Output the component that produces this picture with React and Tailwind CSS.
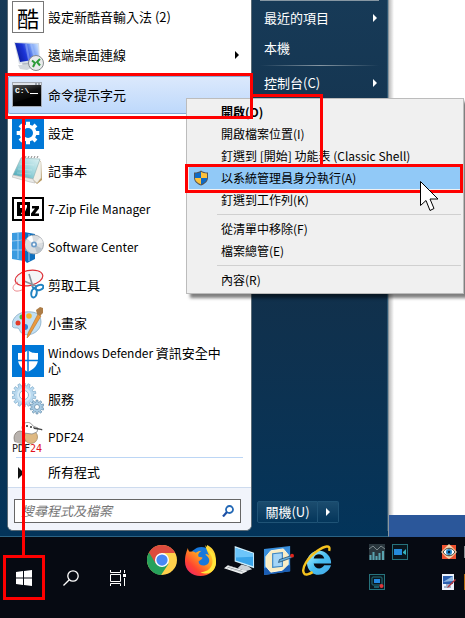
const gearPoints = (cx, cy, outer, inner, teeth) => {
    const points = [];
    for (let i = 0; i < teeth; i++) {
        const base = (i / teeth) * Math.PI * 2;
        const step = (Math.PI * 2) / teeth;
        [[-0.3, inner], [-0.22, outer], [0.22, outer], [0.3, inner]].forEach(([offset, radius]) => {
            const angle = base + offset * step;
            points.push(`${(cx + Math.sin(angle) * radius).toFixed(1)},${(cy - Math.cos(angle) * radius).toFixed(1)}`);
        });
    }
    return points.join(' ');
};

const Icon = ({ children, className = 'size-8' }) => (
    <svg viewBox="0 0 32 32" className={`${className} shrink-0`} aria-hidden="true">{children}</svg>
);

const ChewingIcon = () => (
    <span className="flex size-8 shrink-0 items-center justify-center border border-[#777] bg-white text-[22px] leading-none" aria-hidden="true">酷</span>
);

const RemoteIcon = () => (
    <Icon>
        <defs>
            <linearGradient id="remoteScreen" x1="0" y1="0.6" x2="1" y2="0.3">
                <stop offset="0" stopColor="#0a1a9a" />
                <stop offset="0.4" stopColor="#1c35d8" />
                <stop offset="0.7" stopColor="#6f97f2" />
                <stop offset="1" stopColor="#c3dcff" />
            </linearGradient>
        </defs>
        <path d="M10 24l8-1 1 4-8 1z" fill="#b4bbc4" />
        <path d="M6 26l13-1 3 3-7 3-7-1z" fill="#d3d7dc" />
        <path d="M2 3l25 1 1 17-21 4z" fill="#d5dce6" />
        <path d="M3 4l23 1 1 15-19 3z" fill="url(#remoteScreen)" />
        <path d="M14 5l3 16M19 5l4 15" stroke="#b9d0ff" strokeOpacity="0.4" strokeWidth="2" />
        <circle cx="24" cy="24" r="7.500" fill="#e9ebec" stroke="#858a8e" />
        <path d="M20 21.500l3 2.500-2 4M28 20l-3 3 3 3.500" stroke="#2c9c38" strokeWidth="2" fill="none" />
    </Icon>
);

const CommandIcon = () => (
    <Icon>
        <defs>
            <linearGradient id="cmdGlass" x1="0" y1="0" x2="0.4" y2="1">
                <stop offset="0" stopColor="#555" />
                <stop offset="0.5" stopColor="#111" />
                <stop offset="1" stopColor="#000" />
            </linearGradient>
        </defs>
        <rect x="0.500" y="3.500" width="29" height="24" fill="#000" stroke="#a3a9b3" />
        <rect x="1" y="4" width="28" height="2" fill="#dfe3ea" />
        <path d="M23 5h2m1 0h2" stroke="#5b6470" />
        <path d="M1 6h28v9L1 24z" fill="url(#cmdGlass)" />
        <text x="3" y="14" fontFamily="Liberation Mono, monospace" fontSize="8" fontWeight="700" fill="#fff">C:\</text>
        <path d="M18 14.500h8" stroke="#fff" />
    </Icon>
);

const SettingsIcon = () => (
    <Icon>
        <rect width="32" height="32" fill="#0078d7" />
        <polygon points={gearPoints(16, 16, 11.5, 8.5, 8)} fill="#fff" />
        <circle cx="16" cy="16" r="5" fill="#0078d7" />
    </Icon>
);

const NotepadIcon = () => (
    <Icon>
        <defs>
            <linearGradient id="notepadCover" x1="0" y1="1" x2="1" y2="0">
                <stop offset="0" stopColor="#3b9fb0" />
                <stop offset="0.5" stopColor="#9dd5dc" />
                <stop offset="1" stopColor="#dff2f3" />
            </linearGradient>
        </defs>
        <path d="M27 4l2 3 1 18-5 4-5-5z" fill="#b99a62" />
        <path d="M27 5l2 2v16l-4 5-5-4z" fill="#f2efe6" stroke="#c6c1b2" strokeWidth="0.5" />
        <path d="M9 3l19 1-7 20-20-4z" fill="url(#notepadCover)" stroke="#8bb1b5" strokeWidth="0.6" />
        <path d="M1 20l20 4 2 4-5-1L0 22z" fill="#e9e9e6" stroke="#aaa" strokeWidth="0.5" />
        <path d="M10 3l1-2M13 3l1-2M16 3l1-2M19 3l1-2M22 3l1-2M25 3l1-2" stroke="#888" />
        <path d="M8 9l14 1M6 14l14 1M5 18l14 1" stroke="#fff" strokeOpacity="0.25" />
    </Icon>
);

const SevenZipIcon = () => (
    <Icon>
        <rect x="1" y="5" width="30" height="22" fill="#fff" stroke="#000" strokeWidth="2" />
        <rect x="5" y="9" width="13" height="14" fill="#000" />
        <path d="M8 12h7v2l-3 7h-3l3-6H8z" fill="#fff" />
        <path d="M20 13h7v2.500l-4 5h4V23h-8v-2.500l4-5h-3z" fill="#000" />
    </Icon>
);

const SoftwareCenterIcon = () => (
    <Icon>
        <path d="M0 2l12-1v29L0 28z" fill="#3b9be0" />
        <path d="M12 1l11 2v25l-8 4-3-3z" fill="#0f6fbe" />
        <path d="M0 10l12-1 11 1M0 19h23M6 2v26M17 3v27" stroke="#9fd0f5" />
        <circle cx="22" cy="13.500" r="9.500" fill="#d9dcdf" stroke="#969da5" strokeWidth="0.8" />
        <path d="M22 13.500l-7-6a9 9 0 0 1 5-3z" fill="#fff" />
        <path d="M22 13.500l8 4a9 9 0 0 1-5 5z" fill="#b9c3cc" />
        <path d="M22 13.500l9-2a9 9 0 0 0-3-5z" fill="#eee" />
        <circle cx="22" cy="13.500" r="3" fill="#6d9dca" />
        <circle cx="22" cy="13.500" r="1.200" fill="#fff" />
    </Icon>
);

const SnippingIcon = () => (
    <Icon>
        <ellipse cx="17" cy="9" rx="14" ry="7.500" transform="rotate(-12 17 9)" fill="#f4f5f6" stroke="#dd2e36" strokeWidth="1.200" />
        <path d="M6 13c-5 3-6 6-4 8 2 2 6 1 10-1" stroke="#ec8a8e" fill="none" />
        <path d="M17 5l4 13M12 12l12 5" stroke="#87919a" strokeWidth="1.600" />
        <ellipse cx="27.500" cy="18.500" rx="4" ry="2.500" transform="rotate(-20 27.500 18.500)" fill="none" stroke="#2083c2" strokeWidth="2" />
        <ellipse cx="22" cy="24" rx="2.700" ry="4.500" transform="rotate(10 22 24)" fill="none" stroke="#2083c2" strokeWidth="2" />
        <path d="M19 17l6 2-4 1z" fill="#2083c2" />
    </Icon>
);

const PaintIcon = () => (
    <Icon>
        <path d="M13 5C4 6 0 13 0 18c0 3 3 3 5 3 3 0 2 4 6 6 8 3 18-3 18-12S22 4 13 5z" fill="#c1dff3" stroke="#7ba3bf" strokeWidth="0.700" />
        <circle cx="10" cy="10" r="2.500" fill="#52b74b" />
        <circle cx="17" cy="9" r="2.800" fill="#f4b62d" />
        <circle cx="6" cy="16" r="2.500" fill="#e23c29" />
        <circle cx="13" cy="20" r="3" fill="#387fd1" />
        <path d="M26 7l3 2-12 20-2 2 1-5z" fill="#ea9a3e" stroke="#ad6720" strokeWidth="0.500" />
        <path d="M24 3l4-3 3 1v5l-3 3-3-2z" fill="#ad7d47" />
    </Icon>
);

const DefenderIcon = () => (
    <Icon>
        <rect width="32" height="32" fill="#0078d7" />
        <path d="M16 5c3 3 6 3 10 3v6c0 6-4 10-10 13C10 24 6 20 6 14V8c4 0 7 0 10-3z" fill="#fff" />
        <path d="M16 4v24M5 15.500h22" stroke="#0078d7" strokeWidth="1.500" />
    </Icon>
);

const ServicesIcon = () => (
    <Icon>
        <polygon points={gearPoints(12, 12, 12, 9.5, 14)} fill="#b9d9ef" stroke="#7caaca" strokeWidth="0.700" />
        <circle cx="12" cy="12" r="7" fill="#d8ebf7" />
        <circle cx="12" cy="12" r="4.500" fill="#fff" stroke="#8fb8d4" />
        <polygon points={gearPoints(25, 24, 7, 5, 10)} fill="#a9cce5" stroke="#678fac" strokeWidth="0.700" />
        <circle cx="25" cy="24" r="2.500" fill="#fff" stroke="#7b9eb7" />
    </Icon>
);

const Pdf24Icon = () => (
    <Icon>
        <ellipse cx="8" cy="17" rx="6" ry="7" fill="#b9b3ae" stroke="#777069" strokeWidth="0.700" />
        <ellipse cx="19" cy="16" rx="6.500" ry="6.500" fill="#dfb982" stroke="#9d8158" strokeWidth="0.700" />
        <path d="M10 7c0-6 8-8 11-2l5 2-1 4-5 2-8-1z" fill="#fff" stroke="#888" strokeWidth="0.800" />
        <path d="M21 6l9 2c1 1 0 2-1 1l-7-1z" fill="#444" />
        <circle cx="15" cy="5" r="1" fill="#333" />
        <circle cx="19" cy="6" r="1" fill="#333" />
        <path d="M3 21c6 3 18 3 25 0v3H3z" fill="#fff" />
        <text x="0" y="31" fontFamily="DejaVu Sans Mono, monospace" fontSize="10" fill="#222">PDF<tspan fill="#e1131d">24</tspan></text>
    </Icon>
);

const programs = [
    { label: '設定', icon: SettingsIcon },
    { label: '記事本', icon: NotepadIcon },
    { latin: '7-Zip File Manager', icon: SevenZipIcon },
    { latin: 'Software Center', icon: SoftwareCenterIcon },
    { label: '剪取工具', icon: SnippingIcon },
    { label: '小畫家', icon: PaintIcon },
    { latin: 'Windows Defender ', label: '資訊安全中心', icon: DefenderIcon },
    { label: '服務', icon: ServicesIcon },
    { latin: 'PDF24', icon: Pdf24Icon },
];

const Arrow = ({ className = '' }) => (
    <svg viewBox="0 0 4 8" className={`h-2 w-1 shrink-0 ${className}`} aria-hidden="true"><path d="M0 0l4 4-4 4z" fill="currentColor" /></svg>
);

const ProgramRow = ({ latin, label, icon: ProgramIcon, submenu }) => (
    <button type="button" className="flex h-[38px] w-full shrink-0 items-center gap-1 pr-3 pl-1 text-left text-[13px] leading-[15px]">
        <ProgramIcon />
        <span className="max-w-[176px] flex-1 pb-[2px]">
            {latin && <span className="text-xs leading-[15px]">{latin}</span>}
            {label}
        </span>
        {submenu && <Arrow className="ml-auto" />}
    </button>
);

const PlaceRow = ({ label, submenu }) => (
    <button type="button" className="flex h-[30px] w-full items-center justify-between pr-[10px] pl-3 text-left text-[13px] leading-4">
        <span>{label}</span>
        {submenu && <Arrow />}
    </button>
);

const PlaceDivider = () => (
    <div className="mx-2 my-[2px] h-px bg-gradient-to-r from-transparent via-[#8797a3] to-transparent"></div>
);

const Shield = () => (
    <svg viewBox="0 0 16 16" className="size-4" aria-hidden="true">
        <path d="M8 0.500c2 1.500 4 2 7 2v5c0 4-3 6.500-7 8-4-1.500-7-4-7-8v-5c3 0 5-0.500 7-2z" fill="#555" />
        <path d="M8 1.800V8H2V3.500c2.500 0 4.500-0.500 6-1.700z" fill="#0f6ac4" />
        <path d="M8 1.800c1.500 1.200 3.500 1.700 6 1.700V8H8z" fill="#fdc13a" />
        <path d="M2 8h6v6.400C4.500 13 2 11 2 8z" fill="#fdc13a" />
        <path d="M8 8h6c0 3-2.500 5-6 6.400z" fill="#0f6ac4" />
    </svg>
);

const MenuItem = ({ label, bold, active }) => (
    <button
        type="button"
        role="menuitem"
        className={`flex h-[22px] w-full items-center text-left text-[12px] leading-4 ${bold ? 'font-bold' : ''} ${active ? 'bg-[#91c9f7]' : ''}`}
    >
        <span className="flex w-8 shrink-0 pl-1">{active && <Shield />}</span>
        {label}
    </button>
);

const MenuDivider = () => <div className="my-[3px] ml-7 h-px bg-[#d0d0d0]"></div>;

const ContextMenu = () => (
    <div role="menu" className="absolute top-[98px] left-[186px] w-[278px] border border-[#bcbcbc] bg-[#f0f0f0] p-[2px] shadow-[4px_4px_3px_rgba(0,0,0,0.5)]">
        <MenuItem label="開啟(O)" bold />
        <MenuItem label="開啟檔案位置(I)" />
        <MenuItem label="釘選到 [開始] 功能表 (Classic Shell)" />
        <MenuItem label="以系統管理員身分執行(A)" active />
        <MenuItem label="釘選到工作列(K)" />
        <MenuDivider />
        <MenuItem label="從清單中移除(F)" />
        <MenuItem label="檔案總管(E)" />
        <MenuDivider />
        <MenuItem label="內容(R)" />
    </div>
);

const StartMenu = () => (
    <section className="flex w-[389px] shrink-0 border-r border-r-[#8b969e] border-b border-b-[#2b6384] bg-gradient-to-b from-[#173a57] via-[#12304a] to-[#03345a] pb-[5px] pl-[7px]">
        <div className="flex w-[245px] shrink-0 flex-col overflow-hidden rounded-b-md border-x border-b border-[#5b6b76] bg-white">
            <div className="-mt-[2px]">
                <ProgramRow label="設定新酷音輸入法 (2)" icon={ChewingIcon} />
                <ProgramRow label="遠端桌面連線" icon={RemoteIcon} submenu />
            </div>
            <div className="mt-[2px] rounded-xs bg-gradient-to-b from-[#dce9fc] to-[#bdd8fb] shadow-[inset_0_0_0_1px_#84a9d6]">
                <ProgramRow label="命令提示字元" icon={CommandIcon} />
            </div>
            {programs.map((program) => <ProgramRow key={program.label ?? program.latin} {...program} />)}
            <div className="mx-2 mt-px h-px bg-[#bcd6f5]"></div>
            <button type="button" className="flex h-[29px] items-center pl-[10px] text-left text-[13px] leading-4">
                <svg viewBox="0 0 6 12" className="h-3 w-[6px]" aria-hidden="true"><path d="M0 0l6 6-6 6z" fill="#111" /></svg>
                <span className="ml-6 pb-[2px]">所有程式</span>
            </button>
            <form className="flex-1 border-t border-t-[#cddbee] bg-[#f1f4fb] px-[6px] pt-[11px] pb-[7px]">
                <label className="mr-1 flex h-6 items-center border border-[#666] bg-white px-[6px]">
                    <input type="search" aria-label="搜尋程式及檔案" placeholder="搜尋程式及檔案" className="min-w-0 flex-1 text-[13px] leading-4 italic outline-none placeholder:text-[#777]" />
                    <svg viewBox="0 0 12 12" className="size-3" aria-hidden="true">
                        <circle cx="7.500" cy="4.500" r="3.500" fill="none" stroke="#2368b5" strokeWidth="1.800" />
                        <path d="M5 7l-4 4.500" stroke="#1d4fa5" strokeWidth="2.200" />
                    </svg>
                </label>
            </form>
        </div>
        <div className="flex flex-1 flex-col justify-between border-r border-r-[#2f5874] text-white">
            <div>
                <div className="mx-2 h-px bg-[#8797a3]"></div>
                <div className="mt-[2px]">
                    <PlaceRow label="最近的項目" submenu />
                    <PlaceRow label="本機" />
                </div>
                <PlaceDivider />
                <PlaceRow label="控制台(C)" submenu />
            </div>
            <div className="mb-2 ml-[5px] flex h-[22px] text-[13px] leading-4">
                <button type="button" className="w-[61px] rounded-l-xs border border-[#1f5376] bg-gradient-to-b from-[#1b4c6e] to-[#04365b]">關機(U)</button>
                <button type="button" aria-label="關機選項" className="flex w-[21px] items-center justify-center rounded-r-xs border border-l-0 border-[#1f5376] bg-gradient-to-b from-[#1b4c6e] to-[#04365b]"><Arrow /></button>
            </div>
        </div>
    </section>
);

const ChromeIcon = () => (
    <Icon className="size-[30px]">
        <circle cx="16" cy="16" r="16" fill="#ffd04b" />
        <path d="M16 16L2.100 8A16 16 0 0 0 15 32l8-12z" fill="#26a15b" />
        <path d="M16 8.500h14A16 16 0 0 0 2.100 8l7.400 12z" fill="#dc4b3e" />
        <circle cx="16" cy="16" r="7.500" fill="#fff" />
        <circle cx="16" cy="16" r="6" fill="#4788f4" />
    </Icon>
);

const FirefoxIcon = () => (
    <Icon className="size-[31px]">
        <defs>
            <linearGradient id="foxFire" x1="1" y1="0" x2="0.100" y2="1">
                <stop offset="0" stopColor="#fff044" />
                <stop offset="0.450" stopColor="#ffa020" />
                <stop offset="0.750" stopColor="#ff4530" />
                <stop offset="1" stopColor="#ed1f70" />
            </linearGradient>
        </defs>
        <circle cx="17" cy="14" r="12" fill="#1678dc" />
        <path d="M3 3c0 2 1 3 2 4 3-1 5 0 6 1 2-1 4-2 6-2-3 2-4 4-3 6l4 1c0 2-3 3-4 4 0 4 6 6 10 2 3-4-1-8-3-9 1-1 3 0 4 1-2-5-4-7-2-11 7 4 9 9 9 17 0 9-7 15-16 15S0 26 0 17C0 11 1 8 3 3z" fill="url(#foxFire)" />
        <path d="M21 0c0 5 6 8 7 14 2 8-4 14-12 14 12 6 20-7 14-18-2-4-6-5-9-10z" fill="#ffe63a" />
    </Icon>
);

const ComputerIcon = () => (
    <Icon className="size-[31px]">
        <path d="M11 1l20 7v16l-20-7z" fill="#cdeefd" />
        <path d="M12 3l18 6v13l-18-6z" fill="#39a4e9" />
        <path d="M12 3l18 6v3L12 13z" fill="#6cc5fa" />
        <path d="M18 20l7 2 4 3-7 2-8-3z" fill="#ccd2d7" />
        <path d="M4 21l20 6-6 3L0 24z" fill="#eef0f1" />
        <path d="M4 23l16 5M7 22l-4 2m8-1l-4 2m8-1l-4 2m8-1l-4 2" stroke="#929ba2" strokeWidth="0.700" />
    </Icon>
);

const EditorIcon = () => (
    <Icon className="size-[31px]">
        <path d="M1 4l27-3v26L1 31z" fill="#388edc" />
        <path d="M1 24l27-3v6L1 31z" fill="#1b5eb5" />
        <path d="M8 6l13-2 5 6v10l-6 6-12 2-5-6V12z" fill="#f9edc5" stroke="#fff8dd" />
        <path d="M10 9l10-1v14l-10 1z" fill="#a4d5f7" stroke="#3c86c4" strokeWidth="1.200" />
        <path d="M17 15l12-4 1 2-11 4-3 1z" fill="#63b0df" stroke="#183a57" strokeWidth="0.700" />
        <circle cx="30" cy="11" r="2" fill="#e2251b" />
    </Icon>
);

const ExplorerIcon = () => (
    <Icon className="size-[31px]">
        <defs>
            <linearGradient id="ieBlue" x1="0" y1="0" x2="1" y2="1">
                <stop offset="0" stopColor="#b0f2ff" />
                <stop offset="0.500" stopColor="#48bef0" />
                <stop offset="1" stopColor="#45a9e9" />
            </linearGradient>
        </defs>
        <path d="M5 18a12 12 0 1 1 25 1H12c1 6 8 7 11 2h7c-5 14-24 13-25-3zM12 14h11c-1-6-10-6-11 0z" fill="url(#ieBlue)" />
        <path d="M28 6c2-7-5-5-12 0C6 13-1 24 2 29c1 3 6 1 9-1" fill="none" stroke="#f5c21e" strokeWidth="2.500" />
    </Icon>
);

const TrayButton = ({ label, children }) => (
    <button type="button" aria-label={label} className="flex h-[30px] w-[23px] items-center justify-center">
        <svg viewBox="0 0 16 16" className="size-4" aria-hidden="true">{children}</svg>
    </button>
);

const apps = [
    { label: 'Chrome', icon: ChromeIcon },
    { label: 'Firefox', icon: FirefoxIcon },
    { label: '本機', icon: ComputerIcon },
    { label: '編輯器', icon: EditorIcon },
    { label: 'Internet Explorer', icon: ExplorerIcon },
];

const Taskbar = () => (
    <footer className="flex h-[81px] shrink-0 items-center overflow-hidden bg-[#060a12] text-white">
        <div className="flex shrink-0 items-center">
            <button type="button" aria-label="開始" className="flex h-12 w-[47px] items-center justify-center">
                <svg viewBox="0 0 16 16" className="size-4" fill="#fff" aria-hidden="true">
                    <path d="M0 2l7-1v6.500H0zM8 0.900L16 0v7.500H8zM0 8.500h7V15l-7-1zM8 8.500h8V16l-8-1z" />
                </svg>
            </button>
            <button type="button" aria-label="搜尋" className="flex h-12 w-[47px] items-center justify-center">
                <svg viewBox="0 0 16 16" className="size-4" fill="none" stroke="#fff" strokeWidth="1.300" aria-hidden="true">
                    <circle cx="10" cy="6" r="5.200" />
                    <path d="M6.300 9.700L0.500 15.500" />
                </svg>
            </button>
            <button type="button" aria-label="工作檢視" className="flex h-12 w-12 items-center justify-center">
                <svg viewBox="0 0 16 16" className="size-4" fill="none" stroke="#fff" aria-hidden="true">
                    <path d="M0.500 0v2.500h10V0M0.500 16v-2.500h10V16M0.500 4.500h10v7h-10zM14.500 0v3M14.500 8v8" />
                    <path d="M13 4h3v3h-3z" fill="#fff" stroke="none" />
                </svg>
            </button>
        </div>
        <nav className="flex shrink-0 self-start pt-[7px]">
            {apps.map(({ label, icon: AppIcon }) => (
                <button key={label} type="button" aria-label={label} className="flex h-8 w-[39px] items-center justify-center"><AppIcon /></button>
            ))}
        </nav>
        <div className="ml-7 flex shrink-0 gap-[26px] self-start">
            <div className="grid grid-cols-2">
                <TrayButton label="網路流量">
                    <rect width="16" height="16" fill="#29363d" />
                    <path d="M0 5l4-3 4 4 4-4 4 3" stroke="#7b878b" fill="none" />
                    <path d="M1.500 16v-5M4.500 16V8M7.500 16v-4M10.500 16V9M14 16V7" stroke="#59a3b0" strokeWidth="2" />
                </TrayButton>
                <TrayButton label="攝影機">
                    <rect x="0.500" y="0.500" width="15" height="15" fill="#09171e" stroke="#26727c" />
                    <rect x="2" y="5" width="8" height="6" fill="#258bdc" />
                    <path d="M11 8l3-3v6l-3-2z" fill="#37b5bd" />
                </TrayButton>
                <TrayButton label="螢幕錄影">
                    <rect x="0.500" y="0.500" width="15" height="15" fill="#09171e" stroke="#26727c" />
                    <rect x="3" y="3" width="10" height="8" rx="1" fill="#09171e" stroke="#26727c" />
                    <rect x="5" y="5" width="6" height="4" fill="#2489e1" />
                    <path d="M5 13h5" stroke="#31a1b3" />
                    <circle cx="12.500" cy="12" r="2" fill="#e0373b" />
                </TrayButton>
            </div>
            <div className="grid grid-cols-[23px_23px]">
                <TrayButton label="護眼">
                    <rect x="1" y="1" width="14" height="14" fill="#ef5330" />
                    <path d="M0 8l5-5 3-3 3 3 5 5-5 5-3 2-3-2z" fill="#f8d5ac" />
                    <path d="M2 8c3-5 9-5 12 0-3 5-9 5-12 0z" fill="#fff" stroke="#453828" />
                    <circle cx="8" cy="8" r="3" fill="#2186c8" />
                    <circle cx="8" cy="8" r="1.200" fill="#06182c" />
                </TrayButton>
                <TrayButton label="音量"><rect width="16" height="12" y="2" fill="#8a8d91" /></TrayButton>
                <TrayButton label="畫面擷取">
                    <rect x="1" y="0" width="12" height="16" fill="#edf3fb" />
                    <rect x="2" y="2" width="10" height="8" fill="#2b5faf" />
                    <path d="M2 8l10-6v5z" fill="#90b9e1" />
                    <path d="M3 13h7M5 11h4" stroke="#536f94" />
                    <path d="M15 6l-7 7-2 1 1-2 7-7z" fill="#b2353a" />
                </TrayButton>
                <TrayButton label="更新"><rect width="16" height="16" fill="#b36b0d" /></TrayButton>
            </div>
        </div>
    </footer>
);

const Callouts = () => (
    <svg className="pointer-events-none absolute top-0 left-0 h-[618px] w-[465px]" viewBox="0 0 465 618" fill="none" stroke="#fe0000" strokeWidth="3" aria-hidden="true">
        <path d="M6.500 74.500h245v43h-245zM251 95.500h70.500V166M186.500 165.500h275v26h-275zM23.500 117v440M4.500 556.500h39v42h-39z" />
        <path d="M420.500 181.500v24l5.500-5 4 10 4-2-4-9.500h8z" fill="#fff" stroke="#000" strokeWidth="1" />
    </svg>
);

export default function App() {
    return (
        <main className="relative flex min-h-screen flex-col overflow-hidden bg-white font-['Noto_Sans_CJK_TC',sans-serif] text-black">
            <div className="flex flex-1">
                <StartMenu />
                {/* Desktop behind the menu */}
                <div className="flex flex-1 flex-col justify-end bg-gradient-to-r from-[#bbb] to-white to-[5px]">
                    <div className="h-[22px] bg-[#2b579a]"></div>
                </div>
            </div>
            <Taskbar />
            <ContextMenu />
            <Callouts />
        </main>
    );
}
